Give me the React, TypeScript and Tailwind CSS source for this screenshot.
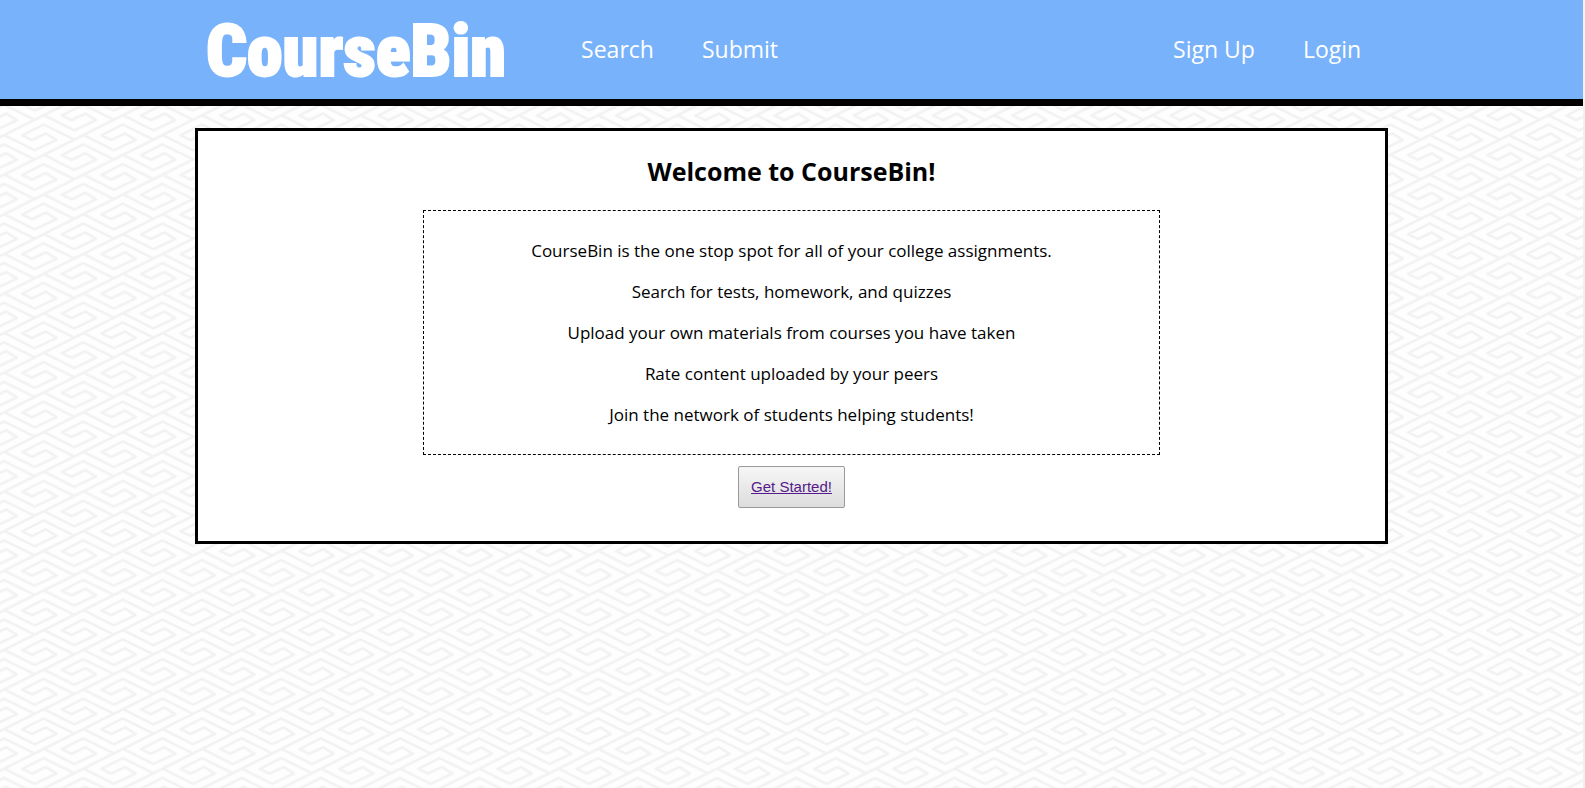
const items = [
  "CourseBin is the one stop spot for all of your college assignments.",
  "Search for tests, homework, and quizzes",
  "Upload your own materials from courses you have taken",
  "Rate content uploaded by your peers",
  "Join the network of students helping students!",
];

const cells = [
  [0, 0], [-240, 0], [240, 0], [0, 120], [0, -120], [-240, 120], [240, -120],
  [120, 60], [-120, 60], [-120, -60], [120, -60], [-120, 180], [120, 180],
];

function Backdrop() {
  return (
    <svg className="absolute inset-0 -z-10 h-full w-full" aria-hidden="true">
      <defs>
        <pattern id="maze" x="4.3" y="-23.4" width="79.2" height="39.6" patternUnits="userSpaceOnUse" viewBox="0 0 240 120">
          <g fill="none" stroke="#f2f2f2" strokeWidth="8" strokeLinejoin="round">
            {cells.map(([x, y]) => (
              <g key={`${x},${y}`} transform={`translate(${x} ${y})`}>
                <path d="M0 0 L120 -60" />
                <path d="M0 0 L92 46 L158 15 L126 -5 L84 15 L54 1 L119 -32 L212 14" />
              </g>
            ))}
          </g>
        </pattern>
      </defs>
      <rect width="100%" height="100%" fill="url(#maze)" />
    </svg>
  );
}

export default function App() {
  return (
    <div className="relative isolate min-h-screen border-r-2 border-[#f1f1f1] bg-[#fefefe] font-['Open_Sans',sans-serif] text-black">
      <Backdrop />
      <header className="border-b-[7px] border-black bg-[#78b2fb]">
        <div className="mx-auto flex h-[99px] w-3/4 items-center px-2 text-[23px] text-white">
          <a href="#home" className="pt-1 font-['Roboto_Condensed',Roboto,sans-serif] text-[72px] leading-[88px] font-black [-webkit-text-stroke:2px_#fff]">
            CourseBin
          </a>
          <nav className="ml-[75px] flex flex-1 gap-12 pr-4">
            <a href="#search">Search</a>
            <a href="#submit">Submit</a>
            <a href="#signup" className="ml-auto">Sign Up</a>
            <a href="#login">Login</a>
          </nav>
        </div>
      </header>
      <main className="mx-auto mt-[22px] flex w-[75.4%] flex-col items-center border-[3px] border-black bg-white pt-[22px] pb-[33px]">
        <h1 className="text-[25px] leading-9 font-bold">Welcome to CourseBin!</h1>
        <section className="mt-[21px] flex w-[62%] flex-col items-center gap-4 border border-dashed border-black py-[27px] text-[17px] leading-[25px]">
          {items.map((t) => (
            <p key={t}>{t}</p>
          ))}
        </section>
        <a href="#start" className="mt-[11px] rounded-xs border border-[#999] bg-linear-to-b from-[#f6f6f6] to-[#dddddd] px-3 py-2 font-['Liberation_Sans',sans-serif] text-[15px] leading-6 text-[#551a8b] underline">Get Started!</a>
      </main>
    </div>
  );
}
